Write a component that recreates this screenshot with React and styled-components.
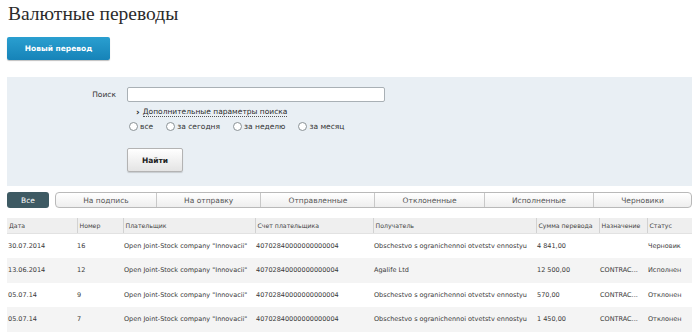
import React, { useState } from 'react';
import styled, { createGlobalStyle } from 'styled-components';

const GlobalStyle = createGlobalStyle`
    body {
        margin: 0;
        background: #fff;
        font-family: "DejaVu Sans", Verdana, sans-serif;
        color: #333;
    }
`;

const Page = styled.div`
    width: 700px;
    padding: 0 8px 0 7px;
    box-sizing: border-box;
`;

const Title = styled.h1`
    margin: 0;
    padding: 2px 0 0 1px;
    height: 35px;
    font-family: "Liberation Serif", "Times New Roman", serif;
    font-weight: normal;
    font-size: 19.5px;
    line-height: 24px;
    color: #2b2b2b;
`;

const NewButton = styled.button`
    display: block;
    width: 103px;
    height: 23px;
    border: none;
    border-radius: 2px;
    background: linear-gradient(#2a9fd0, #1683b8);
    box-shadow: 0 1px 1px rgba(0, 0, 0, 0.25);
    color: #fff;
    font-family: "DejaVu Sans", Verdana, sans-serif;
    font-weight: bold;
    font-size: 7.5px;
    padding: 0;
    cursor: pointer;
`;

const SearchPanel = styled.div`
    margin-top: 17px;
    height: 109px;
    background: #e9eff4;
    padding-top: 10px;
    box-sizing: border-box;
`;

const FormRow = styled.div`
    display: flex;
    align-items: center;
    gap: 11px;
    margin-top: ${p => p.$top || 0}px;
`;

const Label = styled.label`
    width: 109px;
    text-align: right;
    font-size: 7.5px;
    color: #333;
`;

const Spacer = styled.div`
    width: 109px;
`;

const SearchInput = styled.input`
    width: 258px;
    height: 15px;
    box-sizing: border-box;
    border: 1px solid #a9b0b5;
    border-radius: 2px;
    background: #fff;
    outline: none;
`;

const MoreLink = styled.a`
    margin-left: 9px;
    font-size: 7.5px;
    color: #2b2b2b;
    display: flex;
    align-items: center;
    gap: 3px;
    cursor: pointer;
`;

const Chevron = styled.span`
    font-weight: bold;
    font-size: 9px;
`;

const LinkText = styled.span`
    border-bottom: 1px dotted #555;
    line-height: 9px;
`;

const Radios = styled.div`
    display: flex;
    gap: 13px;
    margin-left: 2px;
`;

const RadioLabel = styled.label`
    display: flex;
    align-items: center;
    gap: 2px;
    font-size: 7.5px;
    color: #333;
`;

const Radio = styled.input`
    appearance: none;
    margin: 0;
    width: 9px;
    height: 9px;
    border: 1px solid #8a9296;
    border-radius: 50%;
    background: #fff;
    box-sizing: border-box;
    &:checked {
        background: radial-gradient(#444 35%, #fff 40%);
    }
`;

const FindButton = styled.button`
    width: 56px;
    height: 24px;
    border: 1px solid #b3b3b3;
    border-radius: 2px;
    background: linear-gradient(#ffffff, #e4e4e4);
    box-shadow: 0 1px 1px rgba(0, 0, 0, 0.15);
    font-family: "DejaVu Sans", Verdana, sans-serif;
    font-weight: bold;
    font-size: 7.5px;
    color: #222;
    padding: 0;
`;

const TabsRow = styled.div`
    display: flex;
    gap: 6px;
    margin-top: 6px;
    height: 16px;
`;

const AllTab = styled.button`
    width: 42px;
    border: none;
    border-radius: 3px;
    background: ${p => (p.$active ? '#3e5a63' : '#fff')};
    color: ${p => (p.$active ? '#fff' : '#444')};
    font-family: "DejaVu Sans", Verdana, sans-serif;
    font-size: 7.5px;
    padding: 0;
`;

const TabGroup = styled.div`
    flex: 1;
    display: flex;
    border: 1px solid #b9b9b9;
    border-radius: 4px;
    background: linear-gradient(#ffffff, #eeeeee);
    overflow: hidden;
`;

const Tab = styled.button`
    flex: 1 1 auto;
    border: none;
    border-left: ${p => (p.$first ? 'none' : '1px solid #c8c8c8')};
    background: ${p => (p.$active ? '#3e5a63' : 'transparent')};
    color: ${p => (p.$active ? '#fff' : '#555')};
    font-family: "DejaVu Sans", Verdana, sans-serif;
    font-size: 7.5px;
    padding: 0;
`;

const Table = styled.table`
    margin-top: 10px;
    width: 685px;
    border-collapse: collapse;
    table-layout: fixed;
    font-size: 6.5px;
`;

const Th = styled.th`
    height: 15px;
    padding: 0 0 0 2px;
    background: #efefef;
    border-left: ${p => (p.$first ? 'none' : '1px solid #d2d2d2')};
    border-bottom: 1px solid #e2e2e2;
    text-align: left;
    font-weight: normal;
    font-size: 6.2px;
    color: #444;
    white-space: nowrap;
    overflow: hidden;
`;

const Tr = styled.tr`
    height: 24.5px;
    background: ${p => (p.$odd ? '#f4f4f4' : '#fff')};
`;

const Td = styled.td`
    padding: 0 0 0 ${p => p.$pad ?? 1}px;
    color: #3a3a3a;
    white-space: nowrap;
    overflow: visible;
`;

const columns = [
    { title: 'Дата', width: 70 },
    { title: 'Номер', width: 46 },
    { title: 'Плательщик', width: 132 },
    { title: 'Счет плательщика', width: 118 },
    { title: 'Получатель', width: 163 },
    { title: 'Сумма перевода', width: 63 },
    { title: 'Назначение', width: 48 },
    { title: 'Статус', width: 45 },
];

const payer = 'Open Joint-Stock company "Innovacii"';
const account = '40702840000000000004';
const receiver = 'Obschestvo s ogranichennoi otvetstv ennostyu';

const rows = [
    ['30.07.2014', '16', payer, account, receiver, '4 841,00', '', 'Черновик'],
    ['13.06.2014', '12', payer, account, 'Agalife Ltd', '12 500,00', 'CONTRAC...', 'Исполнен'],
    ['05.07.14', '9', payer, account, receiver, '570,00', 'CONTRAC...', 'Отклонен'],
    ['05.07.14', '7', payer, account, receiver, '1 450,00', 'CONTRAC...', 'Отклонен'],
];

const tabs = ['На подпись', 'На отправку', 'Отправленные', 'Отклоненные', 'Исполненные', 'Черновики'];
const periods = ['все', 'за сегодня', 'за неделю', 'за месяц'];

const App = () => {
    const [activeTab, setActiveTab] = useState('Все');
    const [period, setPeriod] = useState(null);

    return (
        <Page>
            <GlobalStyle />
            <Title>Валютные переводы</Title>
            <NewButton>Новый перевод</NewButton>
            <SearchPanel>
                <FormRow>
                    <Label htmlFor="search">Поиск</Label>
                    <SearchInput id="search" type="text" />
                </FormRow>
                <FormRow $top={5}>
                    <Spacer />
                    <MoreLink>
                        <Chevron>›</Chevron>
                        <LinkText>Дополнительные параметры поиска</LinkText>
                    </MoreLink>
                </FormRow>
                <FormRow $top={5}>
                    <Spacer />
                    <Radios>
                        {periods.map(p => (
                            <RadioLabel key={p}>
                                <Radio
                                    type="radio"
                                    name="period"
                                    checked={period === p}
                                    onChange={() => setPeriod(p)}
                                />
                                {p}
                            </RadioLabel>
                        ))}
                    </Radios>
                </FormRow>
                <FormRow $top={17}>
                    <Spacer />
                    <FindButton>Найти</FindButton>
                </FormRow>
            </SearchPanel>
            <TabsRow>
                <AllTab $active={activeTab === 'Все'} onClick={() => setActiveTab('Все')}>Все</AllTab>
                <TabGroup>
                    {tabs.map((t, i) => (
                        <Tab key={t} $first={i === 0} $active={activeTab === t} onClick={() => setActiveTab(t)}>
                            {t}
                        </Tab>
                    ))}
                </TabGroup>
            </TabsRow>
            <Table>
                <colgroup>
                    {columns.map(c => (
                        <col key={c.title} style={{ width: c.width }} />
                    ))}
                </colgroup>
                <thead>
                    <tr>
                        {columns.map((c, i) => (
                            <Th key={c.title} $first={i === 0}>{c.title}</Th>
                        ))}
                    </tr>
                </thead>
                <tbody>
                    {rows.map((r, i) => (
                        <Tr key={i} $odd={i % 2 === 1}>
                            {r.map((cell, j) => (
                                <Td key={j} $pad={j === 1 ? 0 : 1}>{cell}</Td>
                            ))}
                        </Tr>
                    ))}
                </tbody>
            </Table>
        </Page>
    );
};

export default App;
